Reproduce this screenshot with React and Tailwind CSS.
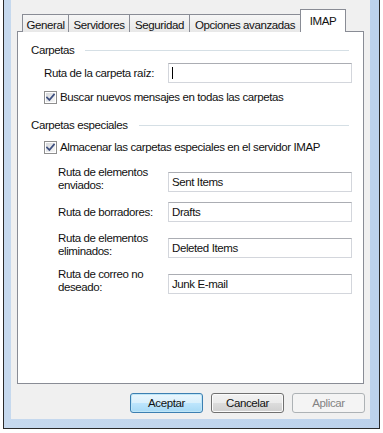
import React from "react";

function Checkbox() {
  return (
    <div className="w-[13px] h-[13px] border border-[#8f8f8f] bg-white p-px shrink-0">
      <div className="w-full h-full bg-[linear-gradient(135deg,#d8dadd,#f6f6f6)] flex items-center justify-center">
        <svg width="9" height="9" viewBox="0 0 9 9">
          <path d="M1 4.6 L3.4 7 L8 1.6" fill="none" stroke="#3d4f80" strokeWidth="1.8" strokeLinecap="square" />
        </svg>
      </div>
    </div>
  );
}

function TextBox({ value, cursor }) {
  return (
    <div className="w-[184px] h-[20px] shrink-0 border border-[#d3d6dc] border-t-[#abadb3] bg-white flex items-center pl-[3px]">
      {cursor ? <div className="w-px h-[12px] bg-black" /> : <span>{value}</span>}
    </div>
  );
}

function Header({ children }) {
  return (
    <div className="h-[14px] flex items-center pr-[14px]">
      <span>{children}</span>
      <div className="flex-1 h-px bg-[#d5dfe5] ml-[11px]" />
    </div>
  );
}

function Row({ label, value }) {
  return (
    <div className="flex items-end">
      <div className="w-[110px] leading-[13px]">{label}</div>
      <TextBox value={value} />
    </div>
  );
}

export default function App() {
  return (
    <div className="w-[383px] h-[433px] bg-white overflow-hidden font-['Liberation_Sans',sans-serif] text-[11.5px] tracking-[-0.4px] text-[#111] leading-[14px]">
      <div className="ml-[3px] w-[377px] h-[429px] border-x border-b border-[#2a2a2a] bg-[linear-gradient(90deg,#c6d9ee,#bcd2ec)] flex flex-col pl-[7px] pr-[9px] pb-[9px]">
        <div className="flex-1 bg-[#f0f0f0] flex flex-col px-[6px] pt-[9px]">
          {/* Tabs */}
          <div className="flex items-end h-[23px] pl-[5px] -mb-px relative z-10">
            <div className="h-[18px] w-[47px] border-l border-t border-r border-[#898c95] bg-[linear-gradient(#f6f6f6,#e8e8e8)] flex items-center justify-center pt-[2px]">General</div>
            <div className="h-[18px] w-[62px] -ml-px border-l border-t border-r border-[#898c95] bg-[linear-gradient(#f6f6f6,#e8e8e8)] flex items-center justify-center pt-[2px]">Servidores</div>
            <div className="h-[18px] w-[61px] -ml-px border-l border-t border-r border-[#898c95] bg-[linear-gradient(#f6f6f6,#e8e8e8)] flex items-center justify-center pt-[2px]">Seguridad</div>
            <div className="h-[18px] w-[112px] -ml-px border-l border-t border-r border-[#898c95] bg-[linear-gradient(#f6f6f6,#e8e8e8)] flex items-center justify-center pt-[2px]">Opciones avanzadas</div>
            <div className="h-[23px] w-[46px] -ml-px border-l border-t border-r border-[#898c95] bg-white flex items-start justify-center pt-[4px]">IMAP</div>
          </div>
          {/* Panel */}
          <div className="h-[353px] border border-[#898c95] bg-white flex flex-col pt-[11px] pl-[13px]">
            <Header>Carpetas</Header>
            <div className="mt-[6px] pl-[13px] flex items-center h-[20px]">
              <div className="w-[124px]">Ruta de la carpeta raíz:</div>
              <TextBox cursor />
            </div>
            <div className="mt-[7px] pl-[13px] flex items-center h-[14px] gap-[3px]">
              <Checkbox />
              <span>Buscar nuevos mensajes en todas las carpetas</span>
            </div>
            <div className="mt-[14px]">
              <Header>Carpetas especiales</Header>
            </div>
            <div className="mt-[8px] pl-[13px] flex items-center h-[14px] gap-[3px]">
              <Checkbox />
              <span>Almacenar las carpetas especiales en el servidor IMAP</span>
            </div>
            <div className="mt-[12px] pl-[27px] flex flex-col gap-[10px]">
              <Row label={<>Ruta de elementos<br />enviados:</>} value="Sent Items" />
              <div className="flex items-center">
                <div className="w-[110px]">Ruta de borradores:</div>
                <TextBox value="Drafts" />
              </div>
              <Row label={<>Ruta de elementos<br />eliminados:</>} value="Deleted Items" />
              <Row label={<>Ruta de correo no<br />deseado:</>} value="Junk E-mail" />
            </div>
          </div>
          {/* Buttons */}
          <div className="mt-[9px] -mr-px flex justify-end gap-[8px]">
            <div className="w-[73px] h-[20px] rounded-[3px] border border-[#3c7fb1] shadow-[inset_0_0_0_1px_#bfe6f7] bg-[linear-gradient(#eaf6fd_0%,#d9f0fc_50%,#bee6fd_50%,#a7d9f5_100%)] flex items-center justify-center">Aceptar</div>
            <div className="w-[73px] h-[20px] rounded-[3px] border border-[#707070] shadow-[inset_0_0_0_1px_#fbfbfb] bg-[linear-gradient(#f2f2f2_0%,#ebebeb_50%,#dddddd_50%,#cfcfcf_100%)] flex items-center justify-center">Cancelar</div>
            <div className="w-[73px] h-[20px] rounded-[3px] border border-[#adb2b5] bg-[#f4f4f4] text-[#838383] flex items-center justify-center">Aplicar</div>
          </div>
        </div>
      </div>
    </div>
  );
}
